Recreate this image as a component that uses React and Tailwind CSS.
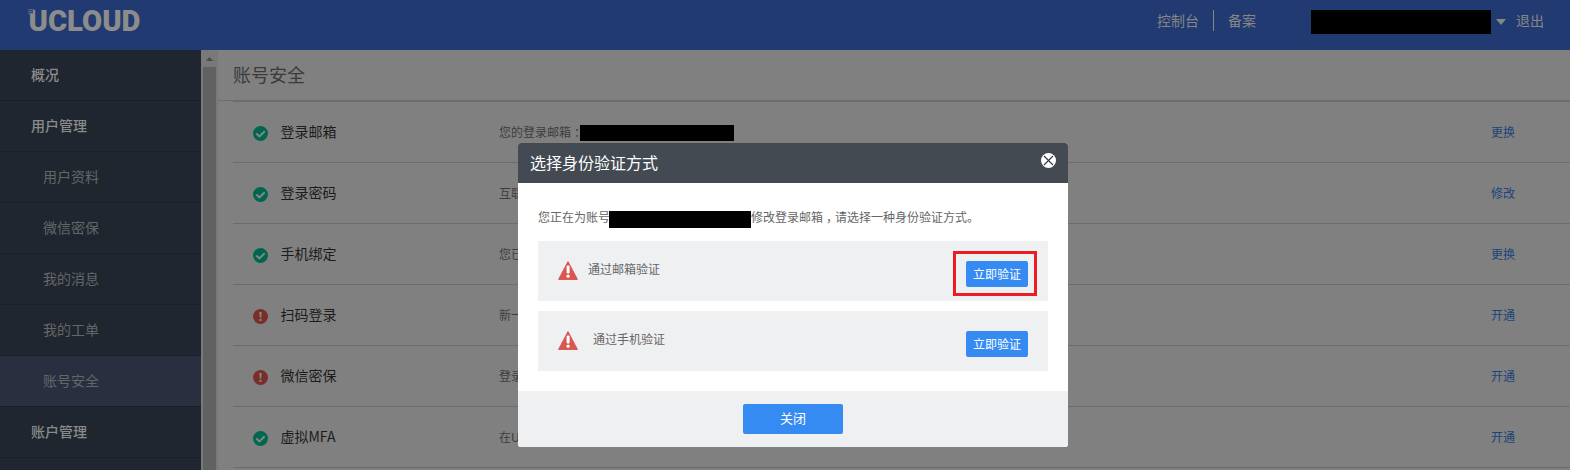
const MENU = [
  { label: '概况' },
  { label: '用户管理' },
  { label: '用户资料', sub: true },
  { label: '微信密保', sub: true },
  { label: '我的消息', sub: true },
  { label: '我的工单', sub: true },
  { label: '账号安全', sub: true, active: true },
  { label: '账户管理' },
  { label: '' },
];

const ROWS = [
  { label: '登录邮箱', ok: true, desc: '您的登录邮箱', masked: true, action: '更换' },
  { label: '登录密码', ok: true, desc: '互联', action: '修改' },
  { label: '手机绑定', ok: true, desc: '您已', action: '更换' },
  { label: '扫码登录', ok: false, desc: '新一', action: '开通' },
  { label: '微信密保', ok: false, desc: '登录', action: '开通' },
  { label: '虚拟MFA', ok: true, desc: '在U', action: '开通' },
];

function Logo() {
  return (
    <svg className="ml-7 mt-2 h-6 w-[114px] shrink-0 overflow-visible" viewBox="0 0 114 24">
      <text
        x="0.5"
        y="22.6"
        textLength="112"
        lengthAdjust="spacingAndGlyphs"
        className="fill-[#8c8c8c] font-['Roboto'] text-[29px] leading-none font-black"
      >
        UCLOUD
      </text>
      <rect x="0" y="0" width="5" height="5.5" fill="#213a71" />
      <g fill="#7c8290">
        {[0.5, 2.5, 4.5].map((x) =>
          [1, 3, 5].map((y) => <rect key={`${x}-${y}`} x={x} y={y} width="1.2" height="1.2" />)
        )}
      </g>
    </svg>
  );
}

function StatusIcon({ ok }) {
  return (
    <svg className="h-[15px] w-[15px] shrink-0" viewBox="0 0 15 15">
      <circle cx="7.5" cy="7.5" r="7.5" fill={ok ? '#006650' : '#7a2e2a'} />
      {ok ? (
        <path d="M3.3 7.5 6.4 10.4 11.7 5.2" fill="none" stroke="#868686" strokeWidth="2" />
      ) : (
        <g fill="#868686">
          <path d="M6.3 3h2.4l-.5 5.8H6.8z" />
          <circle cx="7.5" cy="10.9" r="1.2" />
        </g>
      )}
    </svg>
  );
}

function WarningIcon() {
  return (
    <svg className="mt-5 h-[19px] w-5 shrink-0" viewBox="0 0 20 19">
      <path d="M10 .6 19.4 18.4H.6z" fill="#d9574f" stroke="#d9574f" strokeWidth="1" strokeLinejoin="round" />
      <rect x="8.6" y="4.6" width="3" height="8" rx="1" fill="#fff" />
      <circle cx="10.1" cy="15.2" r="1.6" fill="#fff" />
    </svg>
  );
}

function Header() {
  return (
    <header className="flex h-[50px] shrink-0 items-start bg-[#213a71] text-sm text-[#868686]">
      <Logo />
      <span className="ml-auto mt-2.5 leading-5">控制台</span>
      <span className="ml-3.5 mt-2.5 h-[21px] w-px bg-[#868686]" />
      <span className="ml-3.5 mt-2.5 leading-5">备案</span>
      <span className="ml-[55px] mt-2.5 h-6 w-[180px] bg-black" />
      <svg className="ml-[5px] mt-[19px] h-1.5 w-2.5" viewBox="0 0 10 6">
        <path d="M0 0h10L5 6z" fill="#868686" />
      </svg>
      <span className="ml-2.5 mr-[26px] mt-2.5 leading-5">退出</span>
    </header>
  );
}

function Sidebar() {
  return (
    <nav className="w-[201px] shrink-0 overflow-hidden bg-[#20262f]">
      {MENU.map((item, i) => (
        <div
          key={i}
          className={`flex h-[51px] items-center border-b border-[#1b2027] pb-[3px] text-sm ${
            item.sub ? 'pl-[43px] text-[#646669]' : 'pl-[31px] font-medium text-[#8a8b8d]'
          } ${item.active ? 'bg-[#292f3e]' : ''}`}
        >
          {item.label}
        </div>
      ))}
    </nav>
  );
}

function Scrollbar() {
  return (
    <div className="flex w-[17px] shrink-0 flex-col items-center bg-[#797979]">
      <svg className="mt-[7px] h-1 w-[7px] shrink-0" viewBox="0 0 7 4">
        <path d="M3.5 0 7 4H0z" fill="#4a4a4a" />
      </svg>
      <div className="mt-1.5 w-[13px] grow bg-[#616161]" />
    </div>
  );
}

function Content() {
  return (
    <main className="min-w-0 grow">
      <h1 className="flex h-[51px] items-center border-b border-[#6c6c6c] pb-0.5 pl-[15px] text-lg text-[#3b3b3b]">
        账号安全
      </h1>
      <div className="ml-[15px]">
        {ROWS.map((row) => (
          <div key={row.label} className="flex h-[61px] items-center border-t border-[#6c6c6c] pb-px pl-5 pr-[55px]">
            <div className="flex pt-[3px]">
              <StatusIcon ok={row.ok} />
            </div>
            <span className="ml-[12.5px] w-[218.5px] pb-px text-sm text-[#1c1c1c]">{row.label}</span>
            <span className="flex items-center text-xs text-[#3d3d3d]">
              {row.desc}
              {row.masked && (
                <>
                  <span className="-mr-1.5 pl-[3px]">：</span>
                  <span className="mt-0.5 h-4 w-[154px] bg-black" />
                </>
              )}
            </span>
            <a className="ml-auto text-xs text-[#1c4479]">{row.action}</a>
          </div>
        ))}
        <div className="h-px bg-[#6c6c6c]" />
      </div>
    </main>
  );
}

function VerifyButton() {
  return (
    <button className="h-[26px] w-[62px] rounded-xs bg-[#368bf3] text-xs text-white">立即验证</button>
  );
}

function Dialog() {
  return (
    <section className="absolute left-[518px] top-[143px] flex h-[304px] w-[550px] flex-col overflow-hidden rounded-[3px] bg-white">
      <div className="flex h-10 shrink-0 items-start justify-between bg-[#444a52] px-3">
        <h2 className="text-base leading-[38px] text-white">选择身份验证方式</h2>
        <svg className="mt-2.5 h-[15px] w-[15px]" viewBox="0 0 15 15">
          <circle cx="7.5" cy="7.5" r="7.5" fill="#fff" />
          <path d="M3 3l9 9M12 3l-9 9" stroke="#30353b" strokeWidth="1.1" />
        </svg>
      </div>
      <div className="grow px-5 pt-[26px] text-xs text-[#666]">
        <p className="flex h-4 items-center whitespace-nowrap">
          您正在为账号
          <span className="-ml-px mt-[5px] h-[17px] w-[142px] bg-black" />
          修改登录邮箱<span className="-mr-[3px] pl-[3px]">，</span>请选择一种身份验证方式。
        </p>
        <div className="mt-4 flex h-[60px] bg-[#eff0f2] pl-5">
          <WarningIcon />
          <span className="ml-2.5 mt-[19px] leading-[18px]">通过邮箱验证</span>
          <div className="ml-auto mr-[11px] mt-2.5 flex h-[45px] w-[84px] items-start border-[3px] border-[#ed1c24] pl-2.5 pt-[7px]">
            <VerifyButton />
          </div>
        </div>
        <div className="mt-2.5 flex h-[60px] bg-[#eff0f2] pl-5">
          <WarningIcon />
          <span className="ml-[15px] mt-[19px] leading-[18px]">通过手机验证</span>
          <div className="ml-auto mr-5 mt-5">
            <VerifyButton />
          </div>
        </div>
      </div>
      <div className="flex h-14 shrink-0 items-start justify-center bg-[#eff0f2] pt-[13px]">
        <button className="h-[30px] w-[100px] rounded-xs bg-[#368bf3] pb-[3px] text-[13px] text-white">关闭</button>
      </div>
    </section>
  );
}

export default function App() {
  return (
    <div
      lang="zh-CN"
      className="relative h-[470px] w-[1586px] overflow-hidden bg-white font-['Noto_Sans_CJK_SC',sans-serif]"
    >
      <div className="flex h-full w-[1570px] flex-col bg-[#808080]">
        <Header />
        <div className="flex min-h-0 grow overflow-hidden">
          <Sidebar />
          <Scrollbar />
          <Content />
        </div>
      </div>
      <Dialog />
    </div>
  );
}
